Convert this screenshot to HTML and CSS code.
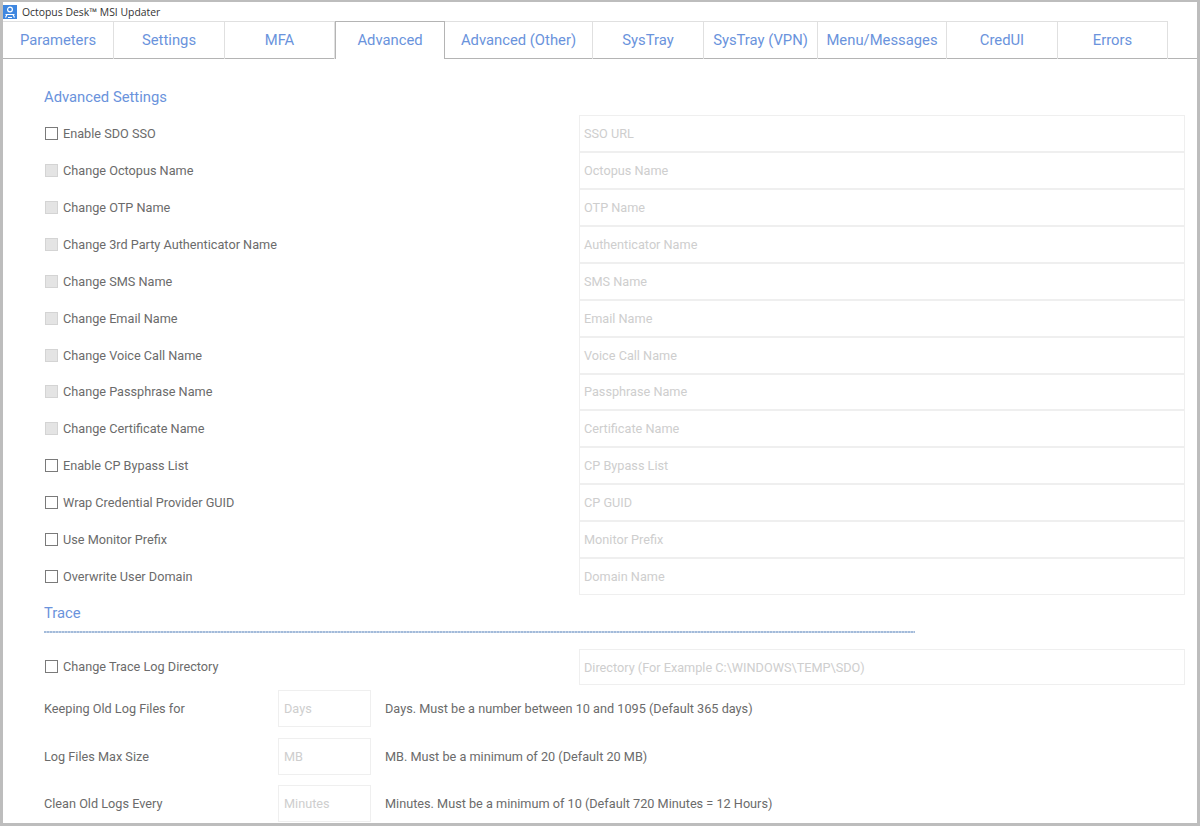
FILE: index.html
```html
<!DOCTYPE html>
<html lang="en">
<head>
<meta charset="utf-8">
<title>Octopus Desk™ MSI Updater</title>
<link rel="stylesheet" href="styles.css">
</head>
<body>
<div class="window">
  <div class="titlebar">
    <svg class="app-icon" width="14" height="14" viewBox="0 0 14 14"><rect width="14" height="14" fill="#3f87e0"/><circle cx="7" cy="4.500" r="2.400" fill="none" stroke="#fff" stroke-width="1.200"/><path d="M2.500 9.500h9M4 9.500l-1.500 3M10 9.500l1.500 3M5 12.500h4" fill="none" stroke="#fff" stroke-width="1.200"/></svg>
    <span class="title">Octopus Desk™ MSI Updater</span>
  </div>
  <div class="tabs">
    <div class="tab w111">Parameters</div>
    <div class="tab w111">Settings</div>
    <div class="tab w110">MFA</div>
    <div class="tab w110 active">Advanced</div>
    <div class="tab w148">Advanced (Other)</div>
    <div class="tab w111">SysTray</div>
    <div class="tab w114">SysTray (VPN)</div>
    <div class="tab w129">Menu/Messages</div>
    <div class="tab w111">CredUI</div>
    <div class="tab w110">Errors</div>
  </div>
  <div class="content">
    <h2 class="heading first">Advanced Settings</h2>
    <div class="rows">
      <div class="row"><label class="check"><span class="box"></span>Enable SDO SSO</label><div class="field">SSO URL</div></div>
      <div class="row"><label class="check"><span class="box off"></span>Change Octopus Name</label><div class="field">Octopus Name</div></div>
      <div class="row"><label class="check"><span class="box off"></span>Change OTP Name</label><div class="field">OTP Name</div></div>
      <div class="row"><label class="check"><span class="box off"></span>Change 3rd Party Authenticator Name</label><div class="field">Authenticator Name</div></div>
      <div class="row"><label class="check"><span class="box off"></span>Change SMS Name</label><div class="field">SMS Name</div></div>
      <div class="row"><label class="check"><span class="box off"></span>Change Email Name</label><div class="field">Email Name</div></div>
      <div class="row"><label class="check"><span class="box off"></span>Change Voice Call Name</label><div class="field">Voice Call Name</div></div>
      <div class="row"><label class="check"><span class="box off"></span>Change Passphrase Name</label><div class="field">Passphrase Name</div></div>
      <div class="row"><label class="check"><span class="box off"></span>Change Certificate Name</label><div class="field">Certificate Name</div></div>
      <div class="row"><label class="check"><span class="box"></span>Enable CP Bypass List</label><div class="field">CP Bypass List</div></div>
      <div class="row"><label class="check"><span class="box"></span>Wrap Credential Provider GUID</label><div class="field">CP GUID</div></div>
      <div class="row"><label class="check"><span class="box"></span>Use Monitor Prefix</label><div class="field">Monitor Prefix</div></div>
      <div class="row"><label class="check"><span class="box"></span>Overwrite User Domain</label><div class="field">Domain Name</div></div>
    </div>
    <h2 class="heading trace">Trace</h2>
    <div class="rule"></div>
    <div class="row dir-row"><label class="check"><span class="box"></span>Change Trace Log Directory</label><div class="field">Directory (For Example C:\WINDOWS\TEMP\SDO)</div></div>
    <div class="logs">
      <div class="log-row"><span class="log-label">Keeping Old Log Files for</span><div class="field small">Days</div><span class="hint">Days. Must be a number between 10 and 1095 (Default 365 days)</span></div>
      <div class="log-row"><span class="log-label">Log Files Max Size</span><div class="field small">MB</div><span class="hint">MB. Must be a minimum of 20 (Default 20 MB)</span></div>
      <div class="log-row"><span class="log-label">Clean Old Logs Every</span><div class="field small">Minutes</div><span class="hint">Minutes. Must be a minimum of 10 (Default 720 Minutes = 12 Hours)</span></div>
    </div>
  </div>
</div>
</body>
</html>
```
FILE: styles.css
```css
* { box-sizing: border-box; }
html, body { margin: 0; height: 100%; }
body { background: #fff; font-family: Roboto, "Liberation Sans", sans-serif; overflow: hidden; }
.window {
  width: 1200px; height: 826px; overflow: hidden;
  border-style: solid; border-color: #bdbdbd;
  border-width: 2px 3px 3px 3px;
  background: #fff; color: #6b6b6b;
}
.titlebar { height: 19px; display: flex; align-items: center; gap: 5px; }
.app-icon { flex: none; }
.title { font-family: "Open Sans", sans-serif; font-size: 10.400px; color: #333; }
.tabs { display: flex; height: 38px; border-bottom: 1px solid #b4b4b4; }
.tab {
  height: 38px; display: flex; align-items: center; justify-content: center;
  flex: none; padding-bottom: 2px;
  font-size: 14.800px; color: #6a93dc; white-space: nowrap;
  border: 1px solid #e0e0e0; border-bottom: 0; border-left: 0;
}
.w110 { width: 110px; }
.w111 { width: 111px; }
.w114 { width: 114px; }
.w129 { width: 129px; }
.w148 { width: 148px; }
.tab.active { border: 1px solid #b4b4b4; border-bottom: 0; background: #fff; position: relative; }
.content { padding-left: 41px; padding-right: 12px; }
.heading { margin: 0; font-weight: 400; font-size: 14.800px; color: #6a93dc; line-height: 18px; }
.heading.first { padding-top: 29px; }
.rows { margin-top: 9.300px; }
.row { display: flex; align-items: stretch; height: 36.900px; }
.check { display: flex; align-items: center; width: 535px; font-size: 12.700px; flex: none; }
.box { width: 13px; height: 13px; border: 1px solid #7a7a7a; margin-right: 5px; margin-left: 1px; flex: none; }
.box.off { background: #e4e4e4; border-color: #d4d4d4; }
.field {
  flex: 1; border: 1px solid #efefef; display: flex; align-items: center;
  padding-left: 4px; font-size: 12.700px; color: #cecece;
}
.heading.trace { margin-top: 8.700px; }
.rule {
  width: 871px; height: 2px; margin-top: 9px;
  background: repeating-linear-gradient(90deg, #a3bbda 0 2px, #c6d5e8 2px 3px);
}
.dir-row { margin-top: 16px; }
.dir-row .check { padding-bottom: 2px; }
.logs { margin-top: 5px; display: flex; flex-direction: column; gap: 10.400px; }
.log-row { display: flex; align-items: center; height: 37px; font-size: 12.700px; }
.log-label { width: 234px; flex: none; }
.field.small { flex: none; width: 93px; height: 37px; padding-left: 5px; }
.hint { margin-left: 14px; }
```
